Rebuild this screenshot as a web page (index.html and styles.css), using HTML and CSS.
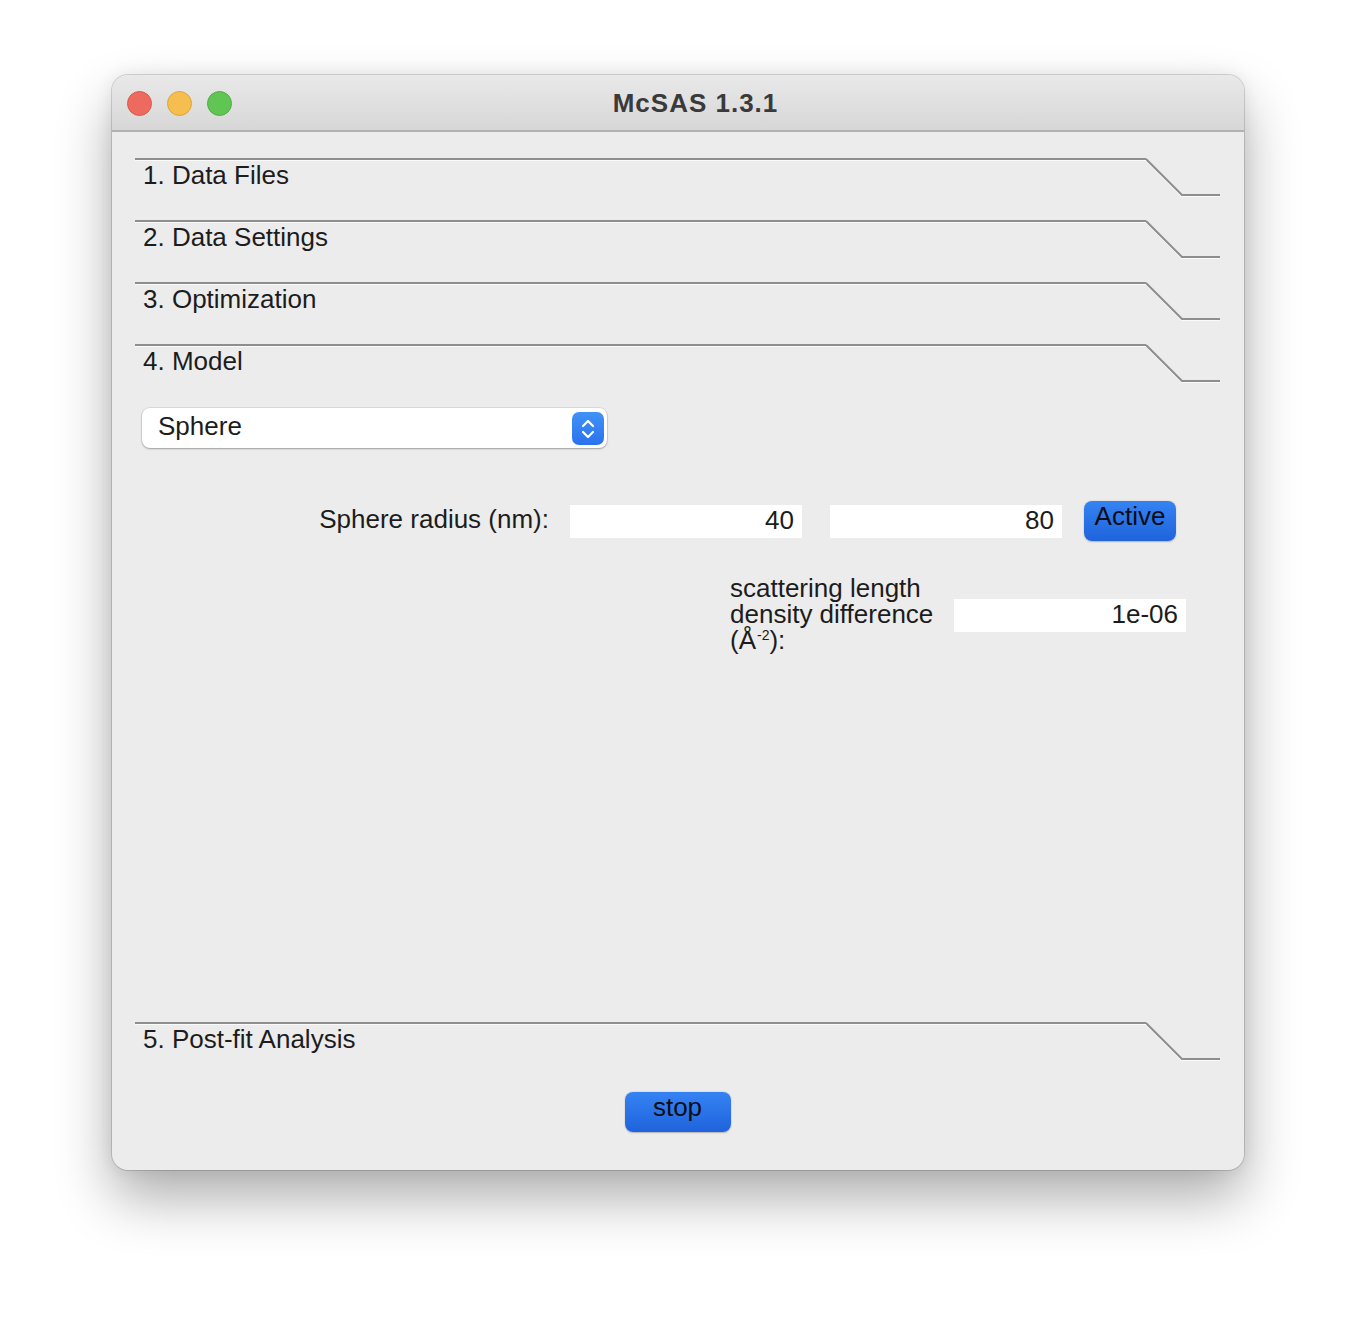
FILE: index.html
```html
<!DOCTYPE html>
<html>
<head>
<meta charset="utf-8">
<title>McSAS 1.3.1</title>
<link rel="stylesheet" href="styles.css">
</head>
<body>
<div class="window">
  <div class="titlebar">
    <div class="lights">
      <span class="light red"></span>
      <span class="light yellow"></span>
      <span class="light green"></span>
    </div>
    <div class="title">McSAS 1.3.1</div>
  </div>
  <div class="content">
    <div class="section-head">
      <div class="label">1. Data Files</div>
      <svg class="tail" width="74" height="40" viewBox="0 0 74 40"><polyline points="0,2.6 35.4,38.6 74,38.6" class="hl"/><polyline points="0,1 36,37 74,37" class="ln"/></svg>
    </div>
    <div class="section-head">
      <div class="label">2. Data Settings</div>
      <svg class="tail" width="74" height="40" viewBox="0 0 74 40"><polyline points="0,2.6 35.4,38.6 74,38.6" class="hl"/><polyline points="0,1 36,37 74,37" class="ln"/></svg>
    </div>
    <div class="section-head">
      <div class="label">3. Optimization</div>
      <svg class="tail" width="74" height="40" viewBox="0 0 74 40"><polyline points="0,2.6 35.4,38.6 74,38.6" class="hl"/><polyline points="0,1 36,37 74,37" class="ln"/></svg>
    </div>
    <div class="section-head">
      <div class="label">4. Model</div>
      <svg class="tail" width="74" height="40" viewBox="0 0 74 40"><polyline points="0,2.6 35.4,38.6 74,38.6" class="hl"/><polyline points="0,1 36,37 74,37" class="ln"/></svg>
    </div>
    <div class="model">
      <div class="select">
        <span class="select-text">Sphere</span>
        <span class="stepper">
          <svg width="32" height="33" viewBox="0 0 32 33"><polyline points="11,14 16,9 21,14"/><polyline points="11,20 16,25 21,20"/></svg>
        </span>
      </div>
      <div class="row-radius">
        <div class="row-label">Sphere radius (nm):</div>
        <div class="field">40</div>
        <div class="field field-2">80</div>
        <div class="btn btn-active">Active</div>
      </div>
      <div class="row-sld">
        <div class="sld-label">scattering length density difference (Å<sup>-2</sup>):</div>
        <div class="field field-sld">1e-06</div>
      </div>
    </div>
    <div class="section-head">
      <div class="label">5. Post-fit Analysis</div>
      <svg class="tail" width="74" height="40" viewBox="0 0 74 40"><polyline points="0,2.6 35.4,38.6 74,38.6" class="hl"/><polyline points="0,1 36,37 74,37" class="ln"/></svg>
    </div>
    <div class="actions">
      <div class="btn btn-stop">stop</div>
    </div>
  </div>
</div>
</body>
</html>
```

FILE: styles.css
```css
html, body {
  margin: 0;
  padding: 0;
  background: #ffffff;
}

body {
  font-family: "Liberation Sans", Arial, sans-serif;
  color: #1c1c1c;
  width: 1356px;
  height: 1318px;
  overflow: hidden;
}

.window {
  margin: 75px 0 0 112px;
  width: 1132px;
  height: 1095px;
  box-sizing: border-box;
  border-radius: 16px;
  background: #ececec;
  overflow: hidden;
  display: flex;
  flex-direction: column;
  box-shadow: 0 0 0 1px rgba(0, 0, 0, 0.14), 0 28px 55px rgba(0, 0, 0, 0.32), 0 0 18px rgba(0, 0, 0, 0.08);
}

.titlebar {
  height: 57px;
  flex: none;
  display: flex;
  align-items: center;
  padding-top: 1px;
  box-sizing: border-box;
  background: linear-gradient(#e9e9e9, #d7d7d7);
  border-bottom: 2px solid #b2b2b2;
}

.lights {
  display: flex;
  gap: 15px;
  padding-left: 15px;
  width: 150px;
  flex: none;
}

.light {
  width: 25px;
  height: 25px;
  border-radius: 50%;
  box-sizing: border-box;
}

.red { background: #ee6a5f; border: 1px solid #d8584e; }
.yellow { background: #f5be4f; border: 1px solid #dca53a; }
.green { background: #61c554; border: 1px solid #4fac43; }

.title {
  flex: 1;
  text-align: center;
  padding-right: 130px;
  font-weight: bold;
  font-size: 26px;
  letter-spacing: 1px;
  color: #3a3a3a;
}

.content {
  flex: 1;
  display: flex;
  flex-direction: column;
  padding: 26px 24px 38px 23px;
}

.section-head {
  display: flex;
  height: 62px;
  flex: none;
}

.section-head .label {
  flex: 1;
  border-top: 2px solid #8e8e8e;
  box-shadow: inset 0 1px 0 #fbfbfb;
  padding: 1px 0 0 8px;
  font-size: 26px;
  line-height: 28px;
}

.tail {
  display: block;
  flex: none;
}

.tail polyline {
  fill: none;
}

.tail .ln {
  stroke: #8e8e8e;
  stroke-width: 2;
}

.tail .hl {
  stroke: #fbfbfb;
  stroke-width: 1;
}

.model {
  flex: 1;
  padding-left: 7px;
}

.select {
  margin-top: 2px;
  width: 465px;
  height: 40px;
  box-sizing: border-box;
  border-radius: 8px;
  background: #ffffff;
  display: flex;
  align-items: center;
  padding-left: 16px;
  box-shadow: 0 0 0 1px rgba(0, 0, 0, 0.07), 0 1px 2px rgba(0, 0, 0, 0.28);
}

.select-text {
  font-size: 26px;
  line-height: 30px;
  padding-bottom: 5px;
}

.stepper {
  margin-left: auto;
  margin-right: 3px;
  width: 32px;
  height: 33px;
  border-radius: 7px;
  background: linear-gradient(#4192f8, #2a72ec);
}

.stepper svg {
  display: block;
}

.stepper polyline {
  fill: none;
  stroke: #ffffff;
  stroke-width: 2.2;
  stroke-linecap: round;
  stroke-linejoin: round;
}

.row-radius {
  margin-top: 53px;
  height: 40px;
  display: flex;
  align-items: center;
}

.row-label {
  width: 407px;
  text-align: right;
  margin-right: 21px;
  font-size: 26px;
  line-height: 30px;
  padding-bottom: 4px;
}

.field {
  width: 232px;
  height: 33px;
  box-sizing: border-box;
  background: #ffffff;
  text-align: right;
  padding-right: 8px;
  font-size: 26px;
  line-height: 30px;
}

.field-2 {
  margin-left: 28px;
}

.btn {
  height: 40px;
  box-sizing: border-box;
  border-radius: 8px;
  background: linear-gradient(#3583f3, #1f63dc);
  display: flex;
  align-items: center;
  justify-content: center;
  font-size: 26px;
  line-height: 30px;
  color: #0d0d14;
  padding-bottom: 10px;
  box-shadow: 0 0.5px 1.5px rgba(0, 0, 0, 0.25);
}

.btn-active {
  margin-left: 22px;
  width: 92px;
}

.row-sld {
  margin-top: 34px;
  margin-left: 588px;
  display: flex;
  align-items: flex-start;
}

.sld-label {
  width: 210px;
  font-size: 26px;
  line-height: 26px;
}

.sld-label sup {
  font-size: 14px;
  line-height: 0;
  vertical-align: 9px;
  margin-left: 1px;
}

.field-sld {
  margin-left: 14px;
  margin-top: 24px;
}

.actions {
  display: flex;
  justify-content: center;
  margin-top: 8px;
}

.btn-stop {
  width: 106px;
}
```
